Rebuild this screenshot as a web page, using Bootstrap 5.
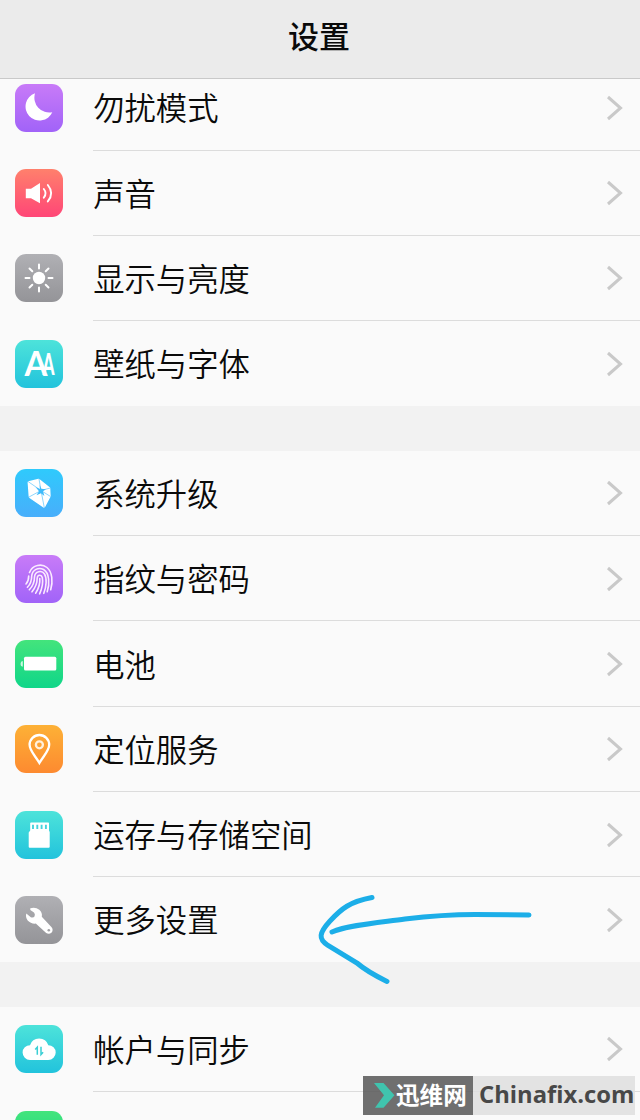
<!DOCTYPE html>
<html lang="zh-CN">
  <head>
    <meta charset="UTF-8" />
    <meta name="viewport" content="width=device-width, initial-scale=1.0" />
    <title>设置</title>
    <!-- Bootstrap CSS -->
    <link href="https://cdn.jsdelivr.net/npm/bootstrap@5.3.2/dist/css/bootstrap.min.css" rel="stylesheet">
    <style>
      body {
        height: 1120px;
        background-color: #f2f2f2;
        color: #0a0a0a;
        font-family: "Noto Sans CJK SC", sans-serif;
      }

      .title-bar {
        height: 79px;
        background-color: #ebebeb;
        border-bottom: 1px solid #c9c9c9;
        padding: 0 2px 8px 0;
        z-index: 2;
      }

      .title-bar h1 {
        font-size: 31px;
        font-weight: 500;
      }

      /* list is scrolled a little way under the title bar */
      .settings {
        margin-top: -13.8px;
        gap: 44.3px;
        min-height: 0;
      }

      .list-group-item.setting {
        height: 85.3px;
        padding: 0 16px 0 15.4px;
        gap: 29.8px;
        border: 0;
        color: inherit;
        background-color: #fafafa;
      }

      .setting-name {
        height: 85.3px;
        font-size: 31.35px;
        font-weight: 350;
        line-height: 1;
        border-bottom: 1px solid #dcdcdc;
        margin-right: -16px;
        padding-right: 16px;
      }

      .setting-name span {
        margin-top: -0.4px;
      }

      .setting-name svg {
        margin-top: 1px;
      }

      .list-group .setting:last-child .setting-name {
        border-bottom-color: transparent;
      }

      .tile {
        width: 48px;
        height: 48px;
        border-radius: 11px;
      }

      .tile-purple { background: linear-gradient(#c87bf8, #a163f8); }
      .tile-red { background: linear-gradient(#ff806c, #ff4677); }
      .tile-gray { background: linear-gradient(#b0b0b4, #949498); }
      .tile-cyan { background: linear-gradient(#4de3da, #22c3dc); }
      .tile-blue { background: linear-gradient(#2fcafc, #48aefb); }
      .tile-green { background: linear-gradient(#43e47c, #0fd689); }
      .tile-orange { background: linear-gradient(#fdb136, #fd8a30); }

      .arrow-mark {
        left: 310px;
        top: 885px;
        z-index: 3;
      }

      .site-mark {
        left: 363px;
        top: 1076px;
        width: 272px;
        height: 39px;
        z-index: 3;
        line-height: 1;
      }

      .site-name {
        width: 110px;
        padding-left: 11px;
        background-color: rgba(90, 90, 90, 0.87);
        color: #fff;
        font-size: 23.6px;
        font-weight: 700;
      }

      .site-name span {
        margin-top: -1.5px;
      }

      .site-url {
        padding: 0 0 1px 6px;
        background-color: rgba(222, 222, 222, 0.82);
        color: #484848;
        font-family: "Open Sans", "Noto Sans", sans-serif;
        font-size: 23.8px;
        font-weight: 700;
      }
    </style>
  </head>
  <body class="position-relative overflow-hidden d-flex flex-column">
    <header class="title-bar position-relative flex-shrink-0 d-flex align-items-center justify-content-center">
      <h1 class="mb-0">设置</h1>
    </header>

    <main class="settings flex-grow-1 overflow-hidden d-flex flex-column">
      <div class="list-group list-group-flush flex-shrink-0">
        <a class="list-group-item setting d-flex align-items-center">
          <svg class="tile tile-purple flex-shrink-0" viewBox="0 0 48 48" fill="#fff">
            <path d="M20 9.3A14 14 0 1 0 37.3 28.3A15 15 0 0 1 20 9.3Z" />
          </svg>
          <div class="setting-name flex-grow-1 d-flex align-items-center justify-content-between">
            <span>勿扰模式</span>
            <svg width="18" height="26" fill="none" stroke="#c9c9c9" stroke-width="3"><path d="M2 2L14.5 13L2 24" /></svg>
          </div>
        </a>
        <a class="list-group-item setting d-flex align-items-center">
          <svg class="tile tile-red flex-shrink-0" viewBox="0 0 48 48" fill="none" stroke="#fff" stroke-width="1.9" stroke-linecap="round">
            <path d="M10.8 19.7H16L25 14V34.3L16 29.3H10.8Z" fill="#fff" stroke="none" />
            <path d="M28.8 20Q32.3 24.3 28.8 28.7M32.8 16Q39.6 24.3 32.8 32.4" />
          </svg>
          <div class="setting-name flex-grow-1 d-flex align-items-center justify-content-between">
            <span>声音</span>
            <svg width="18" height="26" fill="none" stroke="#c9c9c9" stroke-width="3"><path d="M2 2L14.5 13L2 24" /></svg>
          </div>
        </a>
        <a class="list-group-item setting d-flex align-items-center">
          <svg class="tile tile-gray flex-shrink-0" viewBox="0 0 48 48" fill="none" stroke="#fff" stroke-width="2" stroke-linecap="round">
            <circle cx="24" cy="24" r="6.2" fill="#fff" stroke="none" />
            <path d="M24 10.5V14.5M24 33.5V37.5M10.5 24H14.5M33.5 24H37.5M14.5 14.5L17.3 17.3M30.7 30.7L33.5 33.5M14.5 33.5L17.3 30.7M30.7 17.3L33.5 14.5" />
          </svg>
          <div class="setting-name flex-grow-1 d-flex align-items-center justify-content-between">
            <span>显示与亮度</span>
            <svg width="18" height="26" fill="none" stroke="#c9c9c9" stroke-width="3"><path d="M2 2L14.5 13L2 24" /></svg>
          </div>
        </a>
        <a class="list-group-item setting d-flex align-items-center">
          <svg class="tile tile-cyan flex-shrink-0" viewBox="0 0 48 48" fill="#fff" font-family="Lato">
            <text transform="translate(9.6 36)" font-size="34" font-weight="700" textLength="23" lengthAdjust="spacingAndGlyphs">A</text>
            <text transform="translate(27.4 35.3)" font-size="29.5" font-weight="900" textLength="12" lengthAdjust="spacingAndGlyphs">A</text>
          </svg>
          <div class="setting-name flex-grow-1 d-flex align-items-center justify-content-between">
            <span>壁纸与字体</span>
            <svg width="18" height="26" fill="none" stroke="#c9c9c9" stroke-width="3"><path d="M2 2L14.5 13L2 24" /></svg>
          </div>
        </a>
      </div>

      <div class="list-group list-group-flush flex-shrink-0">
        <a class="list-group-item setting d-flex align-items-center">
          <svg class="tile tile-blue flex-shrink-0" viewBox="0 0 48 48" fill="#fff">
            <path d="M13.3 12.3L23.3 9.8Q24 9.7 24.7 10.2L34.8 18.3Q35.3 18.8 35.3 19.5L35.7 27.5L30 38.2Q29.3 39 28.3 38.5L14.8 29.3Q13.8 28.6 13.6 27.3L12.6 13.5Q12.6 12.6 13.3 12.3Z" />
            <path d="M13 12.5L26 21.5L24 10M35.2 19L26 21.5L35.5 27.5M29.3 38.8L26 21.5L14 28" fill="none" stroke="#3fbbfb" stroke-width=".6" />
            <path d="M24.7 16L26.3 19.8L31 20.2L28 22.3L29.4 27L26 24.2L21.5 26.3L24 22.3L20.5 18L24.8 20Z" fill="#3fbbfb" />
          </svg>
          <div class="setting-name flex-grow-1 d-flex align-items-center justify-content-between">
            <span>系统升级</span>
            <svg width="18" height="26" fill="none" stroke="#c9c9c9" stroke-width="3"><path d="M2 2L14.5 13L2 24" /></svg>
          </div>
        </a>
        <a class="list-group-item setting d-flex align-items-center">
          <svg class="tile tile-purple flex-shrink-0" viewBox="0 0 48 48" fill="none" stroke="#fbeaff" stroke-width="1.6" stroke-linecap="round">
            <path d="M14.5 17.5C17.5 9.5 27 8.5 32 12.5C37.5 17 38 27 35.7 34.7" />
            <path d="M13.7 21Q13.7 26 11 29" />
            <path d="M12.4 32.3Q16.7 28 16.7 21C17.5 14.5 23.5 12 28.6 14.5C34.5 18 34.8 29 32.2 36.7" />
            <path d="M14.3 34.8Q19.5 29.5 19.5 22C20 16 27 15 29.5 19C32 23 31.5 31.5 28.8 38.3" />
            <path d="M17 36.8Q22.2 30.5 22.2 23C22.5 19.6 26.5 19.3 27.3 22.5C28.3 27.5 27.3 33 24.6 38.8" />
            <path d="M24.8 23.5Q25.4 30.5 20.7 38.2" />
          </svg>
          <div class="setting-name flex-grow-1 d-flex align-items-center justify-content-between">
            <span>指纹与密码</span>
            <svg width="18" height="26" fill="none" stroke="#c9c9c9" stroke-width="3"><path d="M2 2L14.5 13L2 24" /></svg>
          </div>
        </a>
        <a class="list-group-item setting d-flex align-items-center">
          <svg class="tile tile-green flex-shrink-0" viewBox="0 0 48 48" fill="#fff">
            <rect x="9" y="16.8" width="32.3" height="13.6" rx="1.5" />
            <path d="M7.8 21V26.8Q5.5 26.6 5.5 23.9T7.8 21Z" opacity=".75" />
          </svg>
          <div class="setting-name flex-grow-1 d-flex align-items-center justify-content-between">
            <span>电池</span>
            <svg width="18" height="26" fill="none" stroke="#c9c9c9" stroke-width="3"><path d="M2 2L14.5 13L2 24" /></svg>
          </div>
        </a>
        <a class="list-group-item setting d-flex align-items-center">
          <svg class="tile tile-orange flex-shrink-0" viewBox="0 0 48 48" fill="none" stroke="#fff" stroke-width="2.3">
            <path d="M24.4 38C20.5 31 14.6 26 14.6 19.8A9.8 9.8 0 0 1 34.2 19.8C34.2 26 28.3 31 24.4 38Z" />
            <circle cx="24.4" cy="19.8" r="3.5" stroke="#fff0dc" />
          </svg>
          <div class="setting-name flex-grow-1 d-flex align-items-center justify-content-between">
            <span>定位服务</span>
            <svg width="18" height="26" fill="none" stroke="#c9c9c9" stroke-width="3"><path d="M2 2L14.5 13L2 24" /></svg>
          </div>
        </a>
        <a class="list-group-item setting d-flex align-items-center">
          <svg class="tile tile-cyan flex-shrink-0" viewBox="0 0 48 48" fill="#fff">
            <path d="M16 11.4H33.2Q34 11.4 34 12.2V19.5L34.7 21V35.7Q34.7 36.7 33.7 36.7H14.7Q13.7 36.7 13.7 35.7V21.5L15.2 19.5V12.2Q15.2 11.4 16 11.4Z" />
            <path d="M18 13.8V18M22.3 13.8V18M26.6 13.8V18M30.9 13.8V18" stroke="#45d3dc" stroke-width="1.9" />
          </svg>
          <div class="setting-name flex-grow-1 d-flex align-items-center justify-content-between">
            <span>运存与存储空间</span>
            <svg width="18" height="26" fill="none" stroke="#c9c9c9" stroke-width="3"><path d="M2 2L14.5 13L2 24" /></svg>
          </div>
        </a>
        <a class="list-group-item setting d-flex align-items-center">
          <svg class="tile tile-gray flex-shrink-0" viewBox="0 0 48 48" fill="#fff">
            <path d="M15.3 12.2Q20.5 10.6 24.3 13.8Q27.6 16.8 26.8 20.8L36.6 31.2Q38.6 33.8 36.7 36.4Q34 38.8 31.2 37L20.8 27.6Q15.8 28 12.7 24.5Q10.2 21.3 11.3 17.6L15.8 21.3Q18.5 22.3 19.6 20.2Q20.4 18 19 16.4L15.3 14Z" />
            <circle cx="33.8" cy="34.3" r="1.3" fill="#a0a0a4" />
          </svg>
          <div class="setting-name flex-grow-1 d-flex align-items-center justify-content-between">
            <span>更多设置</span>
            <svg width="18" height="26" fill="none" stroke="#c9c9c9" stroke-width="3"><path d="M2 2L14.5 13L2 24" /></svg>
          </div>
        </a>
      </div>

      <!-- the last group runs past the bottom of the screen -->
      <div class="list-group list-group-flush flex-shrink-0">
        <a class="list-group-item setting d-flex align-items-center">
          <svg class="tile tile-cyan flex-shrink-0" viewBox="0 0 48 48" fill="#fff">
            <path d="M15 35A7.4 7.4 0 0 1 15 20.2A9.6 9.6 0 0 1 33.3 20.2A7.4 7.4 0 0 1 33.3 35Z" />
            <path d="M22.3 29.8V22.2L20.2 24.6M26 21.8V29.6L28.1 27.2" fill="none" stroke="#3acfd5" stroke-width="1.5" />
          </svg>
          <div class="setting-name flex-grow-1 d-flex align-items-center justify-content-between">
            <span>帐户与同步</span>
            <svg width="18" height="26" fill="none" stroke="#c9c9c9" stroke-width="3"><path d="M2 2L14.5 13L2 24" /></svg>
          </div>
        </a>
        <div class="list-group-item setting d-flex align-items-center">
          <svg class="tile tile-green flex-shrink-0" viewBox="0 0 48 48"></svg>
        </div>
      </div>
    </main>

    <!-- hand-drawn arrow pointing at 更多设置 -->
    <svg class="arrow-mark position-absolute" width="230" height="105" viewBox="310 885 230 105" fill="none" stroke="#1caee8" stroke-width="5" stroke-linecap="round">
      <path d="M372 897.5C350 901.5 341 909 330 921C319 933 318 939 328 945.5L357 963C365 970 373 974.5 387 981.5" />
      <path d="M332 932C348 925 380 922.5 405 919C430 916 450 914.5 475 914.5L529 915" />
    </svg>

    <div class="site-mark position-absolute d-flex">
      <div class="site-name flex-shrink-0 d-flex align-items-center">
        <svg class="flex-shrink-0" width="22" height="27" fill="#40c4ae"><path d="M0 1H9.5L20.5 13.2L9.5 25.8H1L10 13.2Z" /></svg>
        <span class="text-nowrap">迅维网</span>
      </div>
      <div class="site-url flex-grow-1 d-flex align-items-center">Chinafix.com</div>
    </div>

    <!-- Bootstrap JS -->
    <script src="https://cdn.jsdelivr.net/npm/bootstrap@5.3.2/dist/js/bootstrap.bundle.min.js"></script>
  </body>
</html>
